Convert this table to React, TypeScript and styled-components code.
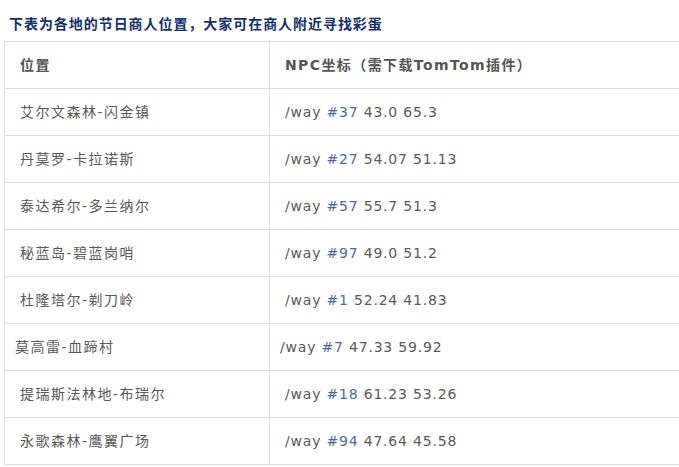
import styled, { createGlobalStyle } from "styled-components";

const GlobalStyle = createGlobalStyle`
  body {
    margin: 0;
    background: #fff;
    font-family: "DejaVu Sans", "Noto Sans CJK SC", sans-serif;
  }
`;

interface Row {
  place: string;
  num: string;
  coords: string;
  tight?: boolean;
}

const rows: Row[] = [
  { place: "艾尔文森林-闪金镇", num: "#37", coords: "43.0 65.3" },
  { place: "丹莫罗-卡拉诺斯", num: "#27", coords: "54.07 51.13" },
  { place: "泰达希尔-多兰纳尔", num: "#57", coords: "55.7 51.3" },
  { place: "秘蓝岛-碧蓝岗哨", num: "#97", coords: "49.0 51.2" },
  { place: "杜隆塔尔-剃刀岭", num: "#1", coords: "52.24 41.83" },
  { place: "莫高雷-血蹄村", num: "#7", coords: "47.33 59.92", tight: true },
  { place: "提瑞斯法林地-布瑞尔", num: "#18", coords: "61.23 53.26" },
  { place: "永歌森林-鹰翼广场", num: "#94", coords: "47.64 45.58" },
];

const Page = styled.div`
  padding: 13px 0 0 4px;
  overflow: hidden;
`;

const Title = styled.h3`
  margin: 0 0 8px 5px;
  font-size: 14px;
  line-height: 20px;
  letter-spacing: 0.95px;
  font-weight: bold;
  color: #15306a;
  font-family: "Noto Sans CJK SC", sans-serif;
`;

const Table = styled.table`
  border-collapse: collapse;
  width: 720px;
  table-layout: fixed;
`;

const HeadCell = styled.th`
  text-align: left;
  border: 1px solid #dedede;
  padding: 13px 15px;
  line-height: 20px;
  font-size: 14px;
  font-weight: bold;
  letter-spacing: 1.4px;
  color: #555;
  white-space: nowrap;
`;

const Cell = styled.td<{ $tight?: boolean; $spacing: number }>`
  border: 1px solid #dedede;
  padding: 13px 15px 13px ${(p) => (p.$tight ? "10px" : "15px")};
  line-height: 20px;
  font-size: 14px;
  letter-spacing: ${(p) => p.$spacing}px;
  color: #595959;
  white-space: nowrap;
`;

const WayNum = styled.span`
  color: #4a69a3;
`;

export default function App() {
  return (
    <Page>
      <GlobalStyle />
      <Title>下表为各地的节日商人位置，大家可在商人附近寻找彩蛋</Title>
      <Table>
        <colgroup>
          <col style={{ width: 265 }} />
          <col />
        </colgroup>
        <thead>
          <tr>
            <HeadCell>位置</HeadCell>
            <HeadCell>NPC坐标（需下载TomTom插件）</HeadCell>
          </tr>
        </thead>
        <tbody>
          {rows.map((r) => (
            <tr key={r.place}>
              <Cell $tight={r.tight} $spacing={1.5}>
                {r.place}
              </Cell>
              <Cell $tight={r.tight} $spacing={0.8}>
                /way <WayNum>{r.num}</WayNum> {r.coords}
              </Cell>
            </tr>
          ))}
        </tbody>
      </Table>
    </Page>
  );
}
